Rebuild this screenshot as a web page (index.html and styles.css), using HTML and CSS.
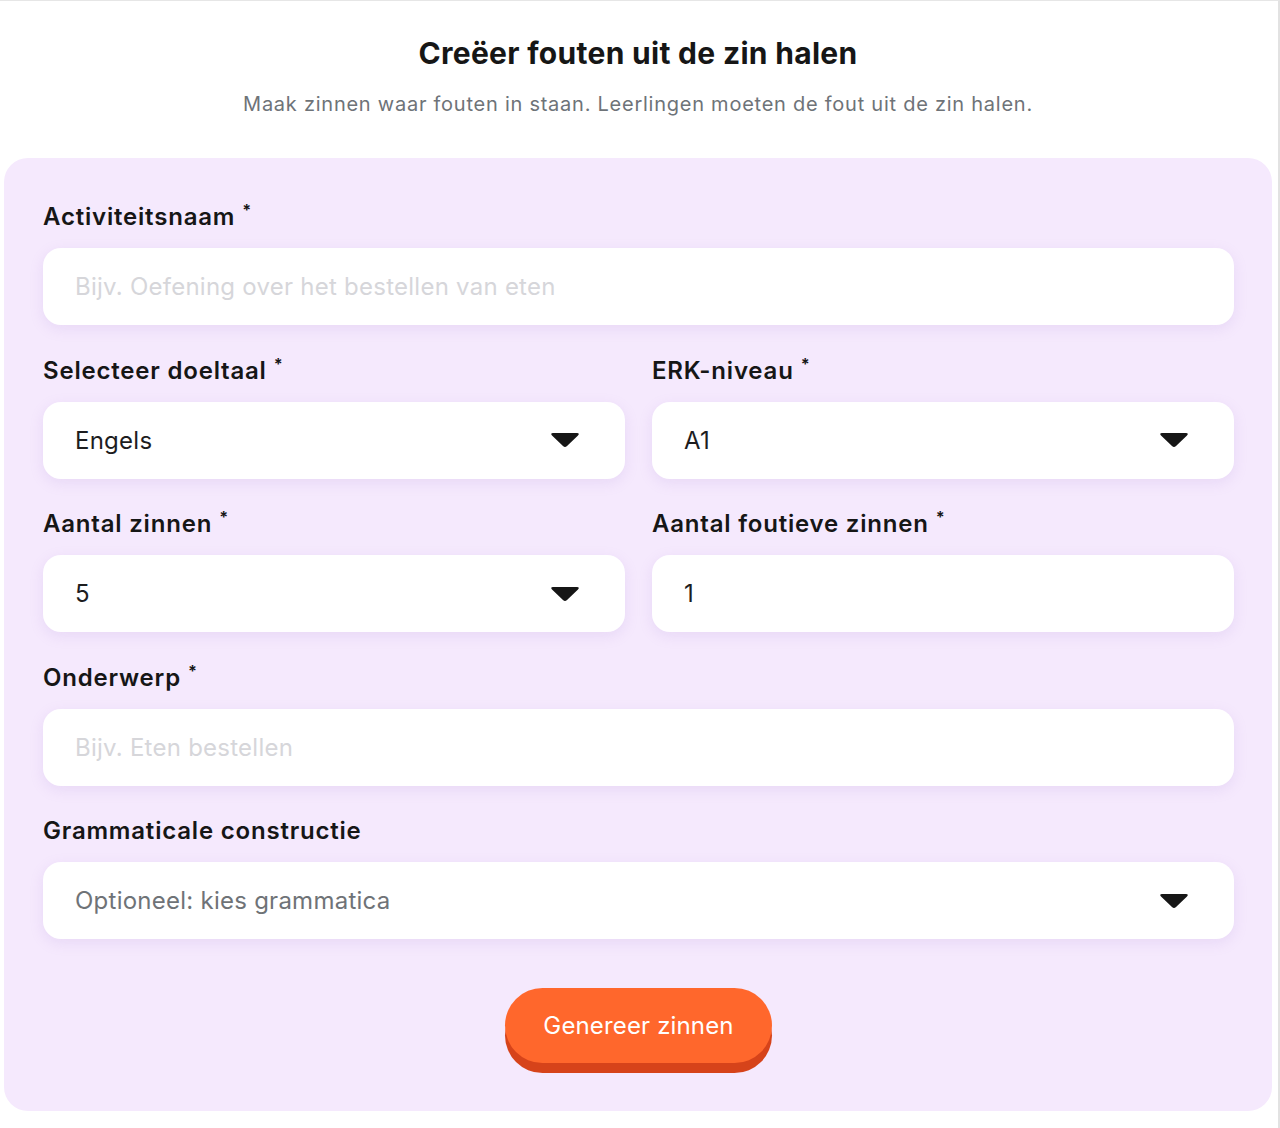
FILE: index.html
```html
<!DOCTYPE html>
<html lang="nl">
<head>
<meta charset="utf-8">
<title>Creëer fouten uit de zin halen</title>
<link rel="stylesheet" href="styles.css">
</head>
<body>
<div class="page">
  <header class="head">
    <h1 class="title">Creëer fouten uit de zin halen</h1>
    <p class="subtitle">Maak zinnen waar fouten in staan. Leerlingen moeten de fout uit de zin halen.</p>
  </header>
  <form class="card">
    <div class="field">
      <label class="label">Activiteitsnaam<span class="req">*</span></label>
      <div class="box"><span class="ph">Bijv. Oefening over het bestellen van eten</span></div>
    </div>
    <div class="row">
      <div class="field">
        <label class="label">Selecteer doeltaal<span class="req">*</span></label>
        <div class="box select"><span class="val">Engels</span><svg class="caret" viewBox="0 0 30 16"><path d="M3 1 H27 Q30 1 28 3.5 L17 14 Q15 16 13 14 L2 3.5 Q0 1 3 1 Z"/></svg></div>
      </div>
      <div class="field">
        <label class="label">ERK-niveau<span class="req">*</span></label>
        <div class="box select"><span class="val">A1</span><svg class="caret" viewBox="0 0 30 16"><path d="M3 1 H27 Q30 1 28 3.5 L17 14 Q15 16 13 14 L2 3.5 Q0 1 3 1 Z"/></svg></div>
      </div>
    </div>
    <div class="row">
      <div class="field">
        <label class="label">Aantal zinnen<span class="req">*</span></label>
        <div class="box select"><span class="val">5</span><svg class="caret" viewBox="0 0 30 16"><path d="M3 1 H27 Q30 1 28 3.5 L17 14 Q15 16 13 14 L2 3.5 Q0 1 3 1 Z"/></svg></div>
      </div>
      <div class="field">
        <label class="label">Aantal foutieve zinnen<span class="req">*</span></label>
        <div class="box"><span class="val">1</span></div>
      </div>
    </div>
    <div class="field">
      <label class="label">Onderwerp<span class="req">*</span></label>
      <div class="box"><span class="ph">Bijv. Eten bestellen</span></div>
    </div>
    <div class="field">
      <label class="label">Grammaticale constructie</label>
      <div class="box select"><span class="opt">Optioneel: kies grammatica</span><svg class="caret" viewBox="0 0 30 16"><path d="M3 1 H27 Q30 1 28 3.5 L17 14 Q15 16 13 14 L2 3.5 Q0 1 3 1 Z"/></svg></div>
    </div>
    <div class="actions">
      <button type="button" class="btn">Genereer zinnen</button>
    </div>
  </form>
</div>
</body>
</html>
```

FILE: styles.css
```css
* { box-sizing: border-box; }
html, body { margin: 0; padding: 0; background: #fff; }
body {
  font-family: Inter, "Noto Sans", "Liberation Sans", sans-serif;
  color: #1a1a1a;
}
.page {
  width: 1280px;
  min-height: 1128px;
  border-top: 1px solid #e6e6e6;
  border-right: 2px solid #e2e2e2;
  padding: 0 6px 0 4px;
}
.head {
  text-align: center;
  padding-top: 34px;
}
.title {
  margin: 0;
  font-size: 30px;
  line-height: 36px;
  font-weight: 700;
  letter-spacing: 0.3px;
  color: #161616;
}
.subtitle {
  margin: 19px 0 0;
  font-size: 20px;
  line-height: 28px;
  color: #6e7378;
  letter-spacing: 0.75px;
}
.card {
  margin-top: 40px;
  background: #f5e9fd;
  border-radius: 24px;
  padding: 44px 38px 38px 39px;
  display: flex;
  flex-direction: column;
  gap: 30.5px;
}
.row {
  display: grid;
  grid-template-columns: 1fr 1fr;
  gap: 27px;
}
.field {
  display: flex;
  flex-direction: column;
  gap: 16px;
}
.label {
  font-size: 24px;
  line-height: 30px;
  font-weight: 600;
  color: #161616;
  letter-spacing: 0.8px;
}
.req {
  font-size: 16px;
  font-weight: 700;
  vertical-align: top;
  position: relative;
  top: -7px;
  margin-left: 7px;
}
.box {
  height: 77px;
  background: #fff;
  border-radius: 18px;
  box-shadow: 0 4px 14px rgba(170, 130, 210, 0.16);
  display: flex;
  align-items: center;
  padding: 0 45px 0 32px;
  font-size: 24px;
  letter-spacing: 0.25px;
}
.select { justify-content: space-between; }
.ph { color: #d6d6da; }
.val { color: #1d1d1f; }
.opt { color: #6f7377; }
.caret {
  width: 30px;
  height: 16px;
  fill: #161616;
}
.actions {
  display: flex;
  justify-content: center;
  padding-top: 18px;
}
.btn {
  width: 267px;
  height: 75px;
  border: 0;
  border-radius: 38px;
  background: #ff672c;
  color: #fff;
  font-family: inherit;
  font-size: 24px;
  font-weight: 400;
  letter-spacing: 0.15px;
  box-shadow: 0 10px 0 #d6431a;
  margin-bottom: 10px;
}
```
